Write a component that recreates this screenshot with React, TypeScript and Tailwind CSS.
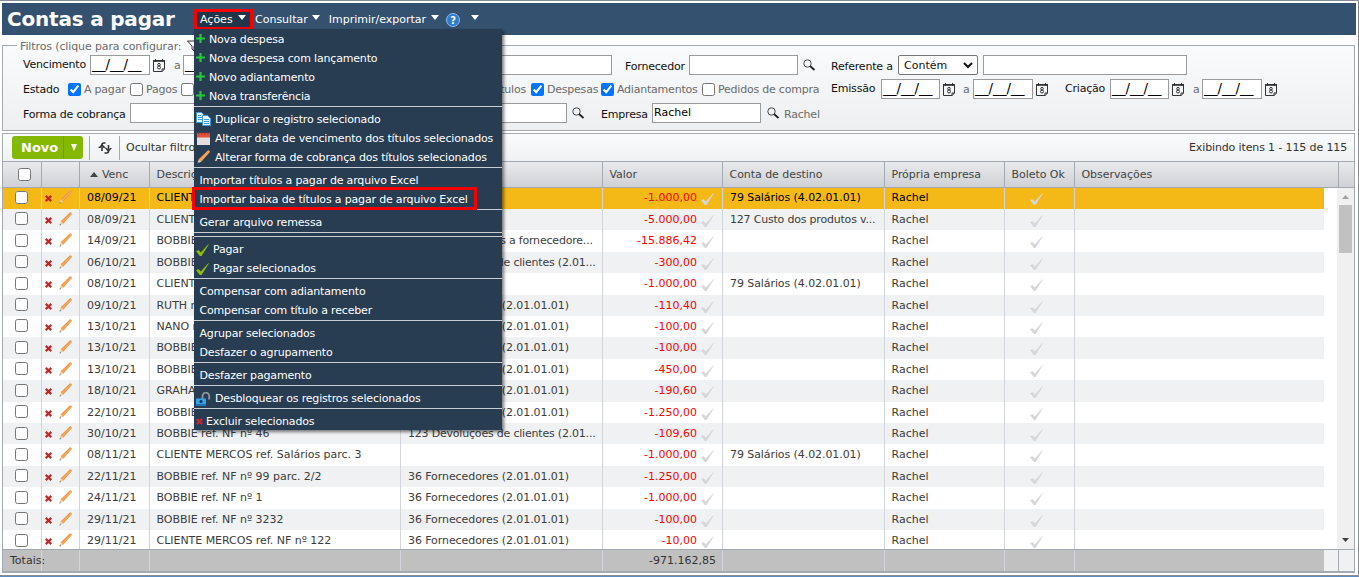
import type { ReactNode } from 'react'
import clsx from 'clsx'

type Row = { venc: string; desc: string; plano?: string; valor: string; destino?: string }

const FORN = '36 Fornecedores (2.01.01.01)'
const DEVOL = '123 Devoluções de clientes (2.01...'
const SALARIOS = '79 Salários (4.02.01.01)'

const rows: Row[] = [
  { venc: '08/09/21', desc: 'CLIENTE MERCOS', valor: '-1.000,00', destino: SALARIOS },
  { venc: '08/09/21', desc: 'CLIENTE MERCOS', valor: '-5.000,00', destino: '127 Custo dos produtos v...' },
  { venc: '14/09/21', desc: 'BOBBIE ref. NF', plano: '37 Adiantamentos a fornecedore...', valor: '-15.886,42' },
  { venc: '06/10/21', desc: 'BOBBIE ref. NF', plano: DEVOL, valor: '-300,00' },
  { venc: '08/10/21', desc: 'CLIENTE MERCOS', valor: '-1.000,00', destino: SALARIOS },
  { venc: '09/10/21', desc: 'RUTH ref. NF', plano: FORN, valor: '-110,40' },
  { venc: '13/10/21', desc: 'NANO ref. NF', plano: FORN, valor: '-100,00' },
  { venc: '13/10/21', desc: 'BOBBIE ref. NF', plano: FORN, valor: '-100,00' },
  { venc: '13/10/21', desc: 'BOBBIE ref. NF', plano: FORN, valor: '-450,00' },
  { venc: '18/10/21', desc: 'GRAHAM ref. NF', plano: FORN, valor: '-190,60' },
  { venc: '22/10/21', desc: 'BOBBIE ref. NF', plano: FORN, valor: '-1.250,00' },
  { venc: '30/10/21', desc: 'BOBBIE ref. NF nº 46', plano: DEVOL, valor: '-109,60' },
  { venc: '08/11/21', desc: 'CLIENTE MERCOS ref. Salários parc. 3', valor: '-1.000,00', destino: SALARIOS },
  { venc: '22/11/21', desc: 'BOBBIE ref. NF nº 99 parc. 2/2', plano: FORN, valor: '-1.250,00' },
  { venc: '24/11/21', desc: 'BOBBIE ref. NF nº 1', plano: FORN, valor: '-1.000,00' },
  { venc: '29/11/21', desc: 'BOBBIE ref. NF nº 3232', plano: FORN, valor: '-100,00' },
  { venc: '29/11/21', desc: 'CLIENTE MERCOS ref. NF nº 122', plano: FORN, valor: '-10,00' },
]

const gridCols = 'grid grid-cols-[39px_38px_70px_251px_202px_120px_162px_120px_70px_1fr]'

function Caret({ className }: { className?: string }) {
  return (
    <svg className={clsx('mb-[3px] shrink-0', className)} width="8" height="5" viewBox="0 0 8 5">
      <path d="M0 0h8L4 5z" fill="#fff" />
    </svg>
  )
}

function Check({ className }: { className?: string }) {
  return (
    <svg className={clsx('h-3 w-[13px] shrink-0', className)} viewBox="0 0 13 12" fill="currentColor">
      <path d="M0 7l2.800-.8 2 2.300L12.500 0l.3.5L5.500 12H3.800z" />
    </svg>
  )
}

function Cross() {
  return (
    <svg className="shrink-0" width="7" height="7" viewBox="0 0 7 7" stroke="#bd2a2a" strokeWidth="2.300">
      <path d="M.7.9l5.600 5.200M6.300.9L.7 6.100" />
    </svg>
  )
}

function Pencil({ className }: { className?: string }) {
  return (
    <svg className={clsx('shrink-0', className)} width="14" height="14" viewBox="0 0 14 14">
      <path d="M1.700 9.300L10.500.8a1.200 1.200 0 012 1.800L4.300 11.800z" fill="#ee9a48" />
      <path d="M3 10.500L12 1.700" stroke="#f7bd7c" strokeWidth=".8" />
      <path d="M.5 13.300l1.200-4 2.600 2.500z" fill="#e8cfa8" />
      <path d="M.5 13.500l.5-1.600 1 1z" fill="#555" />
    </svg>
  )
}

function CalendarIcon() {
  return (
    <svg className="shrink-0" width="12" height="13" viewBox="0 0 12 13" fill="none" stroke="#333">
      <path d="M.5 1.500h11v8.500l-2.300 2.500H.5z" />
      <path d="M0 2h12" strokeWidth="1.600" />
      <path d="M2.500 0v3M9.500 0v3M9 12.500V10h2.500" />
      <circle cx="6" cy="5.700" r="1.300" />
      <circle cx="6" cy="8.500" r="1.500" />
    </svg>
  )
}

function SearchIcon() {
  return (
    <svg className="shrink-0" width="13" height="12" viewBox="0 0 13 12" fill="none" stroke="#444">
      <circle cx="4.500" cy="4.500" r="3.700" />
      <path d="M7 7l4.500 4" stroke="#222" strokeWidth="1.800" />
    </svg>
  )
}

function PlusIcon() {
  return (
    <svg className="mb-px shrink-0" width="9" height="9" viewBox="0 0 9 9" stroke="#27c93b" strokeWidth="2.200">
      <path d="M4.500 0v9M0 4.500h9" />
    </svg>
  )
}

function CopyIcon() {
  return (
    <svg className="shrink-0" width="15" height="14" viewBox="0 0 15 14" fill="#e9f5ff" stroke="#3d9be0">
      <path d="M.5.5h5l3 3v7h-8z" />
      <path d="M2 3.500h3M2 5.500h4M2 7.500h4" />
      <path d="M6.500 3.500h5l3 3v7h-8z" />
      <path d="M8 7.500h5M8 9.500h5M8 11.500h5" />
    </svg>
  )
}

function DateIcon() {
  return (
    <svg className="mt-px shrink-0" width="13" height="13" viewBox="0 0 13 13">
      <path d="M0 4h13v9H0z" fill="#e3dfdc" />
      <path d="M0 1h13v4.500H0z" fill="#e0533f" />
      <path d="M2 0v2.500M5 0v2.500M8 0v2.500M11 0v2.500" stroke="#9c2f22" />
    </svg>
  )
}

function LockIcon() {
  return (
    <svg className="mt-px shrink-0" width="15" height="14" viewBox="0 0 15 14">
      <path d="M6.500 7V4a3.300 3.300 0 016.700 0v3.500" fill="none" stroke="#8d9499" strokeWidth="1.900" />
      <path d="M0 6.500h10V14H0z" fill="#35a3e6" />
      <path d="M0 12h10v2H0z" fill="#1973b8" />
      <circle cx="5" cy="9.500" r="1.500" fill="#0b3455" />
    </svg>
  )
}

type MenuEntry = { label: string; icon?: ReactNode; pad?: string }

const plus = { icon: <PlusIcon />, pad: 'pl-[2px] gap-[4px]' }
const check = { icon: <Check className="mt-px text-[#8cbf0a]" />, pad: 'pl-[2px] gap-[4px]' }

const menuGroups: MenuEntry[][] = [
  [
    { label: 'Nova despesa', ...plus },
    { label: 'Nova despesa com lançamento', ...plus },
    { label: 'Novo adiantamento', ...plus },
    { label: 'Nova transferência', ...plus },
  ],
  [
    { label: 'Duplicar o registro selecionado', icon: <CopyIcon />, pad: 'pl-[2px] gap-[4px]' },
    { label: 'Alterar data de vencimento dos títulos selecionados', icon: <DateIcon />, pad: 'pl-[3px] gap-[5px]' },
    { label: 'Alterar forma de cobrança dos títulos selecionados', icon: <Pencil />, pad: 'pl-[3px] gap-[4px]' },
  ],
  [{ label: 'Importar títulos a pagar de arquivo Excel' }, { label: 'Importar baixa de títulos a pagar de arquivo Excel' }],
  [{ label: 'Gerar arquivo remessa' }],
  [],
  [
    { label: 'Pagar', ...check },
    { label: 'Pagar selecionados', ...check },
  ],
  [{ label: 'Compensar com adiantamento' }, { label: 'Compensar com título a receber' }],
  [{ label: 'Agrupar selecionados' }, { label: 'Desfazer o agrupamento' }],
  [{ label: 'Desfazer pagamento' }],
  [{ label: 'Desbloquear os registros selecionados', icon: <LockIcon />, pad: 'pl-[2px] gap-[4px]' }],
  [{ label: 'Excluir selecionados', icon: <Cross />, pad: 'pl-[2px] gap-[3px]' }],
]

function ActionsMenu() {
  return (
    <div className="absolute top-[28px] left-[194px] z-20 h-[401px] w-[308px] bg-[#283c52] pt-px tracking-[-0.17px] text-white shadow-[2px_2px_3px_rgba(0,0,0,0.5)]">
      {menuGroups.map((group, i) => (
        <div key={i} className={clsx(i > 0 && 'border-t border-[#c9ced4]', i > 0 && (group.length ? 'pt-[3px]' : 'h-1'))}>
          {group.map((item) => (
            <div key={item.label} className={clsx('flex h-[19px] items-center pb-px whitespace-nowrap', item.pad ?? 'pl-[5.500px]')}>
              {item.icon}
              <span>{item.label}</span>
            </div>
          ))}
        </div>
      ))}
      <div className="absolute top-[158px] left-[-2px] h-[23px] w-[285px] border-3 border-[#f60000]" />
    </div>
  )
}

function Label({ className, children }: { className: string; children: ReactNode }) {
  return <span className={clsx('shrink-0 tracking-[-0.2px] whitespace-nowrap', className)}>{children}</span>
}

function Box({ className, children }: { className: string; children?: ReactNode }) {
  return (
    <div className={clsx('h-5 shrink-0 overflow-hidden border border-[#9b9b9b] bg-white leading-[17px] whitespace-nowrap text-black', className)}>
      {children}
    </div>
  )
}

function DateField({ className, box = 'w-[60px]' }: { className?: string; box?: string }) {
  return (
    <div className={clsx('flex shrink-0 items-center gap-[3px]', className)}>
      <Box className={clsx('pl-px text-[13.500px]', box)}>__/__/__</Box>
      <CalendarIcon />
    </div>
  )
}

function Option({ label, checked, className }: { label: string; checked?: boolean; className: string }) {
  return (
    <label className={clsx('flex shrink-0 items-center gap-[3px] tracking-[-0.22px] whitespace-nowrap text-[#6b6b6b]', className)}>
      <input type="checkbox" defaultChecked={checked} className="size-[13px] shrink-0" />
      <span>{label}</span>
    </label>
  )
}

function Filters() {
  return (
    <div className="relative mt-[10px] mr-[3px] ml-[2px] h-[86px] shrink-0 border border-[#a3a9b3] bg-linear-to-b from-[#fafbfc] to-[#eeeff1] pl-5">
      <div className="absolute top-[-6px] left-[14px] flex h-3 items-center bg-linear-to-b from-white from-50% to-[#fafbfc] to-50% px-[3px] tracking-[-0.12px] text-[#6b6b6b]">
        Filtros (clique para configurar:
        <svg className="ml-[6px]" width="12" height="12" viewBox="0 0 12 12" fill="none" stroke="#333">
          <path d="M.5 1h11L7 6v5L5 9V6z" />
        </svg>
      </div>
      <div className="mt-[9px] flex h-5 items-center">
        <Label className="w-[67px] pb-[2px]">Vencimento</Label>
        <DateField className="w-[84px]" />
        <Label className="w-[9px] text-[#6b6b6b]">a</Label>
        <DateField className="w-[93px]" />
        <Box className="w-[336px]" />
        <Label className="w-[77px] pt-[3px] pl-[13px]">Fornecedor</Label>
        <Box className="w-[109px]" />
        <div className="w-[33px] pl-[5px]">
          <SearchIcon />
        </div>
        <Label className="w-[67px] pt-[3px]">Referente a</Label>
        <div className="flex h-5 w-20 shrink-0 items-center justify-between rounded-[2px] border border-[#767676] bg-white pr-1 pl-[5px]">
          Contém
          <svg width="10" height="7" viewBox="0 0 10 7" fill="none" stroke="#111" strokeWidth="2">
            <path d="M1 1l4 4 4-4" />
          </svg>
        </div>
        <Box className="ml-[5px] w-[204px]" />
      </div>
      <div className="mt-1 flex h-5 items-center">
        <Label className="w-[45px] pt-px">Estado</Label>
        <Option label="A pagar" checked className="w-[62px]" />
        <Option label="Pagos" className="w-[51px]" />
        <Option label="Cancelados" className="w-[290px]" />
        <Label className="w-[60px] pr-[5px] text-right text-[#6b6b6b]">Títulos</Label>
        <Option label="Despesas" checked className="w-[70px]" />
        <Option label="Adiantamentos" checked className="w-[101px]" />
        <Option label="Pedidos de compra" className="w-[129px]" />
        <Label className="w-[50px] pb-[2px]">Emissão</Label>
        <DateField className="w-[82px]" box="w-[59px]" />
        <Label className="w-[10px] text-[#6b6b6b]">a</Label>
        <DateField className="w-[92px]" />
        <Label className="w-[45px] pb-[2px]">Criação</Label>
        <DateField className="w-[83px]" box="w-[59px]" />
        <Label className="w-[9px] text-[#6b6b6b]">a</Label>
        <DateField />
      </div>
      <div className="mt-1 flex h-5 items-center">
        <Label className="w-[107px] pt-[3px]">Forma de cobrança</Label>
        <Box className="w-[437px]" />
        <div className="w-[34px] pl-[5px]">
          <SearchIcon />
        </div>
        <Label className="w-[51px] pt-[3px]">Empresa</Label>
        <Box className="w-[109px] pl-px">Rachel</Box>
        <div className="w-[23px] pl-[6px]">
          <SearchIcon />
        </div>
        <Label className="pt-[3px] text-[#6b6b6b]">Rachel</Label>
      </div>
    </div>
  )
}

function Toolbar() {
  return (
    <div className="flex h-[27px] shrink-0 items-center bg-linear-to-b from-[#fafbfc] to-[#f0f1f3] pr-[7px] pl-[9px] text-[#333]">
      <div className="flex h-[23px] w-[71px] items-center rounded-[3px] bg-[#85b800] font-bold text-white">
        <span className="w-[51px] pl-[9px] text-[13px]">Novo</span>
        <span className="flex h-full flex-1 items-center justify-center border-l border-[#74a103]">
          <svg width="6" height="7" viewBox="0 0 6 7">
            <path d="M0 0h6L3 7z" fill="#fff" />
          </svg>
        </span>
      </div>
      <div className="ml-[6px] flex h-6 w-[31px] items-center justify-center border-x border-[#a3a9b3]">
        <svg width="14" height="12" viewBox="0 0 14 12" fill="none" stroke="#333" strokeWidth="1.600">
          <path d="M7.500 1H6Q4 1 4 3v6M6.500 11H8.500Q10.500 11 10.500 9V3" />
          <path d="M0 6h2.500L4 3.500 5.500 6H8L4 2zM6.800 6h2.200l1.500 2.500L12 6h2l-3.500 4z" fill="#333" stroke="none" />
        </svg>
      </div>
      <span className="ml-[6px]">Ocultar filtros</span>
      <span className="ml-auto pb-px tracking-[-0.13px]">Exibindo itens 1 - 115 de 115</span>
    </div>
  )
}

const headers = ['Descrição', 'Plano', 'Valor', 'Conta de destino', 'Própria empresa', 'Boleto Ok', 'Observações']

function TableHeader() {
  return (
    <div className="flex h-[27px] shrink-0 border-y border-[#a3a9b3] bg-linear-to-b from-[#e8eaec] to-[#cfd1d6] tracking-[-0.05px] text-[#444]">
      <div className={clsx(gridCols, 'w-[1336px] divide-x divide-[#a3a9b3] border-r border-[#a3a9b3] leading-[25px]')}>
        <div className="flex items-center pb-px pl-[15px]">
          <input type="checkbox" className="size-[13px]" />
        </div>
        <div />
        <div className="flex items-center pl-[10px]">
          <svg className="mr-1" width="8" height="5" viewBox="0 0 8 5">
            <path d="M0 5h8L4 0z" fill="#444" />
          </svg>
          Venc
        </div>
        {headers.map((h) => (
          <div key={h} className="overflow-hidden pl-[6.500px] whitespace-nowrap">
            {h}
          </div>
        ))}
      </div>
    </div>
  )
}

// long names arrive already cut with dots and are set a little tighter
function Account({ name }: { name?: string }) {
  return (
    <div className={clsx('overflow-hidden pl-[7px]', name?.endsWith('...') ? 'tracking-[-0.2px]' : 'tracking-[-0.08px]')}>
      {name}
    </div>
  )
}

function TableRow({ row, index }: { row: Row; index: number }) {
  const selected = index === 0
  return (
    <div
      className={clsx(
        gridCols,
        'h-[21.43px] divide-x divide-[#d2d5db] leading-[22px] whitespace-nowrap',
        selected ? 'bg-[#f5b917] text-black' : index % 2 ? 'bg-[#f0f1f3] text-[#3c3c3c]' : 'bg-white text-[#3c3c3c]',
      )}
    >
      <div className="flex items-center pb-[2px] pl-3">
        <input type="checkbox" className="size-[13px]" />
      </div>
      <div className="flex items-center gap-[7px] pb-[2px] pl-[3px]">
        <div className="pt-[3px]">
          <Cross />
        </div>
        <Pencil />
      </div>
      <div className="pl-[7px]">{row.venc}</div>
      <div className="overflow-hidden pl-[6.500px] tracking-[-0.03px]">{row.desc}</div>
      <Account name={row.plano} />
      <div className="flex justify-end pr-[8px] text-[#f00]">
        {row.valor}
        <Check className="mt-[6px] ml-[4px] text-[#d5d7da]" />
      </div>
      <Account name={row.destino} />
      <div className="pl-[6.500px]">Rachel</div>
      <div className="flex pl-[25px]">
        <Check className="mt-[6px] text-[#d5d7da]" />
      </div>
      <div />
    </div>
  )
}

function Scrollbar() {
  return (
    <div className="flex w-[17px] flex-col items-center bg-[#f0f0f0] pt-[7px] pb-[7px]">
      <svg width="7" height="4" viewBox="0 0 7 4">
        <path d="M0 4h7L3.500 0z" fill="#a0a0a0" />
      </svg>
      <div className="mt-[6px] h-12 w-[13px] bg-[#c1c1c1]" />
      <svg className="mt-auto" width="7" height="4" viewBox="0 0 7 4">
        <path d="M0 0h7L3.500 4z" fill="#404040" />
      </svg>
    </div>
  )
}

function Totals() {
  return (
    <div className="flex h-[22px] shrink-0 border-t border-[#a3a9b3] bg-[#f0f1f3]">
      <div className={clsx(gridCols, 'w-[1321px] divide-x divide-[#d2d5db] bg-[#c0c0c0] leading-[21px] text-[#333]')}>
        <div className="pl-[7px] whitespace-nowrap">Totais:</div>
        <div />
        <div />
        <div />
        <div />
        <div className="pr-[6px] text-right">-971.162,85</div>
        <div />
        <div />
        <div />
        <div />
      </div>
      <div className="ml-[14px] w-px bg-[#a3a9b3]" />
    </div>
  )
}

export default function App() {
  return (
    <div className="relative flex h-[577px] w-[1359px] flex-col overflow-hidden border-t border-r border-[#8a8a90] bg-white font-['DejaVu_Sans',sans-serif] text-[11px] leading-[13px] text-[#111]">
      <div className="mt-[2px] mr-[2px] ml-[2px] flex h-8 shrink-0 items-center bg-[#34516f] text-white">
        <h1 className="w-[192px] pl-[5px] text-[20px] leading-6 font-bold tracking-[-0.2px]">Contas a pagar</h1>
        <div className="flex h-[21px] w-[59px] items-center border-3 border-[#f60000] bg-[#22364b] pl-[3px] whitespace-nowrap">
          Ações
          <Caret className="ml-[5px]" />
        </div>
        <div className="ml-[2px] flex items-center">
          Consultar
          <Caret className="ml-[4px]" />
        </div>
        <div className="ml-[9px] flex items-center">
          Imprimir/exportar
          <Caret className="ml-[5px]" />
        </div>
        <div className="mt-[2px] ml-[7px] flex size-[14px] items-center justify-center rounded-full border border-[#8fbbe8] bg-[#2f7bd0] text-[10px] font-bold">?</div>
        <Caret className="ml-[11px]" />
      </div>

      <Filters />

      <div className="mt-[2px] mr-[3px] ml-[2px] flex h-[440px] shrink-0 flex-col border border-b-2 border-[#a3a9b3]">
        <Toolbar />
        <TableHeader />
        <div className="flex h-[361px] shrink-0 justify-between overflow-hidden">
          <div className="-mt-[0.6px] w-[1321px]">
            {rows.map((row, i) => (
              <TableRow key={i} row={row} index={i} />
            ))}
          </div>
          <Scrollbar />
        </div>
        <Totals />
      </div>
      <div className="mt-auto h-[2px] shrink-0 border-t border-[#8a8a90] bg-[#5b8fc4]" />

      <ActionsMenu />
    </div>
  )
}
